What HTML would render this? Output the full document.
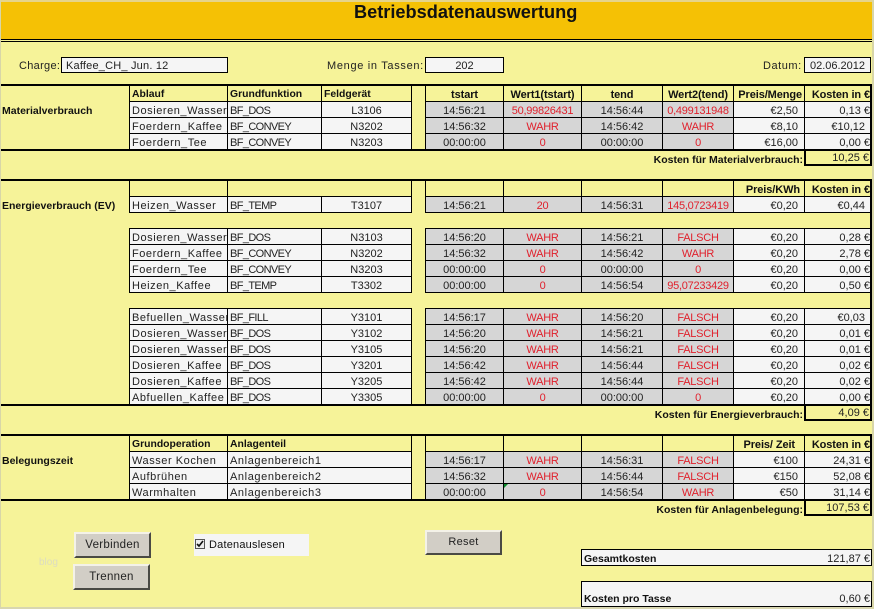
<!DOCTYPE html>
<html><head><meta charset="utf-8"><style>
html,body{margin:0;padding:0}
body{width:874px;height:609px;position:relative;overflow:hidden;background:#f6f399;font-family:"Liberation Sans",sans-serif;font-size:11px;color:#222}
.a{position:absolute;white-space:nowrap}
.k{position:absolute;background:#000}
.inp{position:absolute;background:#f5f5f5;border:1px solid #000;box-sizing:border-box;height:16px;line-height:15px;padding-top:1px;letter-spacing:.2px;white-space:nowrap}
table{position:absolute;border-collapse:separate;border-spacing:0;table-layout:fixed}
td{box-sizing:border-box;height:16px;padding:3px 0 0;vertical-align:top;border-right:1px solid #000;border-bottom:1px solid #000;overflow:hidden;white-space:nowrap;line-height:12px;background:#f5f5f5}
td:first-child{border-left:1px solid #000}
.L{left:129px;width:283px}
.R{left:425px;width:447px}
.L td{padding-left:2px;letter-spacing:.55px}
.L td.c{text-align:center;padding-left:0;letter-spacing:0}
.L td:nth-child(2){letter-spacing:-.62px}
.L.q td:nth-child(2){letter-spacing:.6px}
.R td{text-align:center}
.R td:nth-child(n+5){text-align:right;padding-right:2px}
.R td:nth-child(5){padding-right:6px}
.R td:nth-child(6){border-right:2px solid #000;padding-right:0}
td.g{background:#d6d6d6}
td.r{background:#d6d6d6;color:#e0202c;letter-spacing:-.25px}
td.h{background:#f6f399;font-weight:bold;color:#111;letter-spacing:-.1px}
.L td.h,.L.q td.h{font-size:10.4px;letter-spacing:0}
td.p{padding-right:5px!important}
table.b tr:first-child td{border-top:1px solid #000;height:17px}
.bd{font-weight:bold;color:#111;font-size:10.5px}
.btn{position:absolute;box-sizing:border-box;background:#d2cec6;border:2px solid;border-color:#f4f2e8 #4a4a44 #4a4a44 #f4f2e8;text-align:center;font-size:11.5px;letter-spacing:.3px;line-height:22px;color:#222}
.tot{position:absolute;left:581px;width:291px;box-sizing:border-box;background:#f5f5f5;border:1px solid #000}
</style></head><body>
<div class="a" style="left:0;top:0;width:874px;height:2px;background:#e6d48a"></div>
<div class="a" style="left:0;top:0;width:1px;height:609px;background:#d8d6a8"></div>
<div class="a" style="left:0;top:607px;width:874px;height:2px;background:#d8d6b0"></div>
<div class="a" style="left:872px;top:0;width:2px;height:609px;background:#d8d6a8"></div>
<div class="a" style="left:1px;top:2px;width:871px;height:37px;background:#f5c105"></div>
<div class="k" style="left:1px;top:39px;width:871px;height:1px"></div>
<div class="k" style="left:1px;top:41px;width:871px;height:1px"></div>
<div class="a" style="left:354px;top:0;font-size:18.2px;line-height:24px;font-weight:bold;color:#111">Betriebsdatenauswertung</div>

<div class="a" style="left:19px;top:59px;line-height:14px;letter-spacing:.3px">Charge:</div>
<div class="inp" style="left:61px;top:57px;width:167px;padding-left:4px">Kaffee_CH_ Jun. 12</div>
<div class="a" style="left:327px;top:59px;line-height:14px;letter-spacing:.68px">Menge in Tassen:</div>
<div class="inp" style="left:425px;top:57px;width:79px;text-align:center;letter-spacing:0">202</div>
<div class="a" style="left:763px;top:59px;line-height:14px;letter-spacing:.55px">Datum:</div>
<div class="inp" style="left:804px;top:57px;width:67px;text-align:center;letter-spacing:0">02.06.2012</div>

<div class="a bd" style="left:2px;top:104px;line-height:14px">Materialverbrauch</div>
<div class="a bd" style="left:2px;top:199px;line-height:14px">Energieverbrauch (EV)</div>
<div class="a bd" style="left:2px;top:454px;line-height:14px">Belegungszeit</div>

<!-- Material -->
<table class="L" style="top:86px"><colgroup><col style="width:99px"><col style="width:94px"><col style="width:90px"></colgroup>
<tr><td class="h">Ablauf</td><td class="h">Grundfunktion</td><td class="h">Feldgerät</td></tr>
<tr><td>Dosieren_Wasser</td><td>BF_DOS</td><td class="c">L3106</td></tr>
<tr><td>Foerdern_Kaffee</td><td>BF_CONVEY</td><td class="c">N3202</td></tr>
<tr><td>Foerdern_Tee</td><td>BF_CONVEY</td><td class="c">N3203</td></tr>
</table>
<table class="R" style="top:86px"><colgroup><col style="width:79px"><col style="width:78px"><col style="width:81px"><col style="width:71px"><col style="width:71px"><col style="width:67px"></colgroup>
<tr><td class="h">tstart</td><td class="h">Wert1(tstart)</td><td class="h">tend</td><td class="h">Wert2(tend)</td><td class="h" style="padding-right:2px">Preis/Menge</td><td class="h">Kosten in €</td></tr>
<tr><td class="g">14:56:21</td><td class="r">50,99826431</td><td class="g">14:56:44</td><td class="r">0,499131948</td><td>€2,50</td><td>0,13 €</td></tr>
<tr><td class="g">14:56:32</td><td class="r">WAHR</td><td class="g">14:56:42</td><td class="r">WAHR</td><td>€8,10</td><td class="p">€10,12</td></tr>
<tr><td class="g">00:00:00</td><td class="r">0</td><td class="g">00:00:00</td><td class="r">0</td><td>€16,00</td><td>0,00 €</td></tr>
</table>
<div class="k" style="left:1px;top:84px;width:871px;height:2px"></div>
<div class="k" style="left:1px;top:149px;width:871px;height:2px"></div>
<div class="a bd" style="right:71px;top:153px;line-height:14px">Kosten für Materialverbrauch:</div>
<div class="a" style="left:804px;top:150px;width:68px;height:16px;box-sizing:border-box;border:2px solid #000;border-top:0;text-align:right;line-height:17px;padding-right:1px">10,25 €</div>

<!-- Energie A -->
<table class="L" style="top:181px"><colgroup><col style="width:99px"><col style="width:94px"><col style="width:90px"></colgroup>
<tr><td class="h"></td><td class="h" colspan="2" style="border-right:1px solid #000"></td></tr>
<tr><td>Heizen_Wasser</td><td>BF_TEMP</td><td class="c">T3107</td></tr>
</table>
<table class="R" style="top:181px"><colgroup><col style="width:79px"><col style="width:78px"><col style="width:81px"><col style="width:71px"><col style="width:71px"><col style="width:67px"></colgroup>
<tr><td class="h"></td><td class="h"></td><td class="h"></td><td class="h"></td><td class="h" style="padding-right:4px">Preis/KWh</td><td class="h">Kosten in €</td></tr>
<tr><td class="g">14:56:21</td><td class="r">20</td><td class="g">14:56:31</td><td class="r">145,0723419</td><td>€0,20</td><td class="p">€0,44</td></tr>
</table>
<div class="k" style="left:870px;top:180px;width:2px;height:225px"></div>

<!-- Energie B -->
<table class="L b" style="top:228px"><colgroup><col style="width:99px"><col style="width:94px"><col style="width:90px"></colgroup>
<tr><td>Dosieren_Wasser</td><td>BF_DOS</td><td class="c">N3103</td></tr>
<tr><td>Foerdern_Kaffee</td><td>BF_CONVEY</td><td class="c">N3202</td></tr>
<tr><td>Foerdern_Tee</td><td>BF_CONVEY</td><td class="c">N3203</td></tr>
<tr><td>Heizen_Kaffee</td><td>BF_TEMP</td><td class="c">T3302</td></tr>
</table>
<table class="R b" style="top:228px"><colgroup><col style="width:79px"><col style="width:78px"><col style="width:81px"><col style="width:71px"><col style="width:71px"><col style="width:67px"></colgroup>
<tr><td class="g">14:56:20</td><td class="r">WAHR</td><td class="g">14:56:21</td><td class="r">FALSCH</td><td>€0,20</td><td>0,28 €</td></tr>
<tr><td class="g">14:56:32</td><td class="r">WAHR</td><td class="g">14:56:42</td><td class="r">WAHR</td><td>€0,20</td><td>2,78 €</td></tr>
<tr><td class="g">00:00:00</td><td class="r">0</td><td class="g">00:00:00</td><td class="r">0</td><td>€0,20</td><td>0,00 €</td></tr>
<tr><td class="g">00:00:00</td><td class="r">0</td><td class="g">14:56:54</td><td class="r">95,07233429</td><td>€0,20</td><td>0,50 €</td></tr>
</table>

<!-- Energie C -->
<table class="L b" style="top:308px"><colgroup><col style="width:99px"><col style="width:94px"><col style="width:90px"></colgroup>
<tr><td>Befuellen_Wasser</td><td>BF_FILL</td><td class="c">Y3101</td></tr>
<tr><td>Dosieren_Wasser</td><td>BF_DOS</td><td class="c">Y3102</td></tr>
<tr><td>Dosieren_Wasser</td><td>BF_DOS</td><td class="c">Y3105</td></tr>
<tr><td>Dosieren_Kaffee</td><td>BF_DOS</td><td class="c">Y3201</td></tr>
<tr><td>Dosieren_Kaffee</td><td>BF_DOS</td><td class="c">Y3205</td></tr>
<tr><td>Abfuellen_Kaffee</td><td>BF_DOS</td><td class="c">Y3305</td></tr>
</table>
<table class="R b" style="top:308px"><colgroup><col style="width:79px"><col style="width:78px"><col style="width:81px"><col style="width:71px"><col style="width:71px"><col style="width:67px"></colgroup>
<tr><td class="g">14:56:17</td><td class="r">WAHR</td><td class="g">14:56:20</td><td class="r">FALSCH</td><td>€0,20</td><td class="p">€0,03</td></tr>
<tr><td class="g">14:56:20</td><td class="r">WAHR</td><td class="g">14:56:21</td><td class="r">FALSCH</td><td>€0,20</td><td>0,01 €</td></tr>
<tr><td class="g">14:56:20</td><td class="r">WAHR</td><td class="g">14:56:21</td><td class="r">FALSCH</td><td>€0,20</td><td>0,01 €</td></tr>
<tr><td class="g">14:56:42</td><td class="r">WAHR</td><td class="g">14:56:44</td><td class="r">FALSCH</td><td>€0,20</td><td>0,02 €</td></tr>
<tr><td class="g">14:56:42</td><td class="r">WAHR</td><td class="g">14:56:44</td><td class="r">FALSCH</td><td>€0,20</td><td>0,02 €</td></tr>
<tr><td class="g">00:00:00</td><td class="r">0</td><td class="g">00:00:00</td><td class="r">0</td><td>€0,20</td><td>0,00 €</td></tr>
</table>
<div class="k" style="left:1px;top:179px;width:871px;height:2px"></div>
<div class="k" style="left:1px;top:404px;width:871px;height:2px"></div>
<div class="a bd" style="right:71px;top:408px;line-height:14px">Kosten für Energieverbrauch:</div>
<div class="a" style="left:804px;top:405px;width:68px;height:16px;box-sizing:border-box;border:2px solid #000;border-top:0;text-align:right;line-height:17px;padding-right:1px">4,09 €</div>

<!-- Belegung -->
<table class="L q" style="top:436px"><colgroup><col style="width:99px"><col style="width:184px"></colgroup>
<tr><td class="h">Grundoperation</td><td class="h">Anlagenteil</td></tr>
<tr><td>Wasser Kochen</td><td>Anlagenbereich1</td></tr>
<tr><td>Aufbrühen</td><td>Anlagenbereich2</td></tr>
<tr><td>Warmhalten</td><td>Anlagenbereich3</td></tr>
</table>
<table class="R" style="top:436px"><colgroup><col style="width:79px"><col style="width:78px"><col style="width:81px"><col style="width:71px"><col style="width:71px"><col style="width:67px"></colgroup>
<tr><td class="h"></td><td class="h"></td><td class="h"></td><td class="h"></td><td class="h" style="padding-right:9px">Preis/ Zeit</td><td class="h">Kosten in €</td></tr>
<tr><td class="g">14:56:17</td><td class="r">WAHR</td><td class="g">14:56:31</td><td class="r">FALSCH</td><td>€100</td><td>24,31 €</td></tr>
<tr><td class="g">14:56:32</td><td class="r">WAHR</td><td class="g">14:56:44</td><td class="r">FALSCH</td><td>€150</td><td>52,08 €</td></tr>
<tr><td class="g">00:00:00</td><td class="r">0</td><td class="g">14:56:54</td><td class="r">WAHR</td><td>€50</td><td>31,14 €</td></tr>
</table>
<div class="a" style="left:504px;top:484px;width:0;height:0;border-top:4px solid #0a8a2a;border-right:4px solid transparent"></div>
<div class="k" style="left:1px;top:434px;width:871px;height:2px"></div>
<div class="k" style="left:1px;top:499px;width:871px;height:2px"></div>
<div class="a bd" style="right:71px;top:503px;line-height:14px">Kosten für Anlagenbelegung:</div>
<div class="a" style="left:804px;top:500px;width:68px;height:16px;box-sizing:border-box;border:2px solid #000;border-top:0;text-align:right;line-height:17px;padding-right:1px">107,53 €</div>

<!-- Controls -->
<div class="btn" style="left:74px;top:532px;width:77px;height:26px">Verbinden</div>
<div class="btn" style="left:73px;top:564px;width:77px;height:26px;line-height:23px">Trennen</div>
<div class="btn" style="left:425px;top:530px;width:77px;height:25px;line-height:21px;font-size:11px">Reset</div>
<div class="a" style="left:39px;top:556px;font-size:10px;line-height:14px;color:#dcdcc0">blog</div>
<div class="a" style="left:194px;top:534px;width:115px;height:22px;background:#f5f5f5"></div>
<div class="a" style="left:195px;top:539px;width:10px;height:10px;box-sizing:border-box;border:1px solid #555;background:#eee">
<svg width="8" height="8" viewBox="0 0 8 8" style="display:block"><path d="M1 4l2 2 4-5" fill="none" stroke="#111" stroke-width="1.6"/></svg></div>
<div class="a" style="left:209px;top:538px;line-height:14px;letter-spacing:.2px;color:#111">Datenauslesen</div>

<div class="tot" style="top:549px;height:17px"></div>
<div class="a bd" style="left:584px;top:552px;line-height:14px">Gesamtkosten</div>
<div class="a" style="right:4px;top:552px;line-height:14px">121,87 €</div>
<div class="tot" style="top:581px;height:26px"></div>
<div class="a bd" style="left:584px;top:592px;line-height:14px">Kosten pro Tasse</div>
<div class="a" style="right:4px;top:592px;line-height:14px">0,60 €</div>
</body></html>
